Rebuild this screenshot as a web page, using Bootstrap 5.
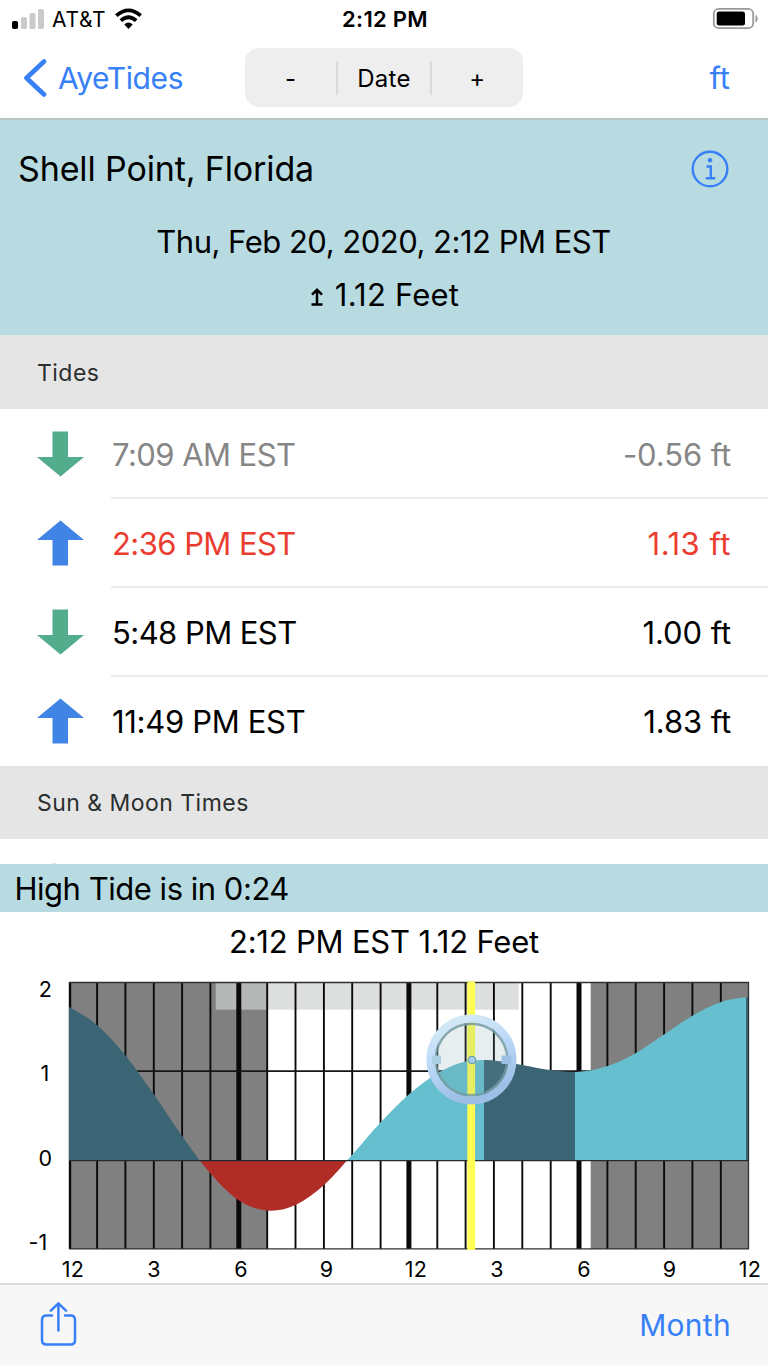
<!DOCTYPE html>
<html lang="en">
<head>
<meta charset="utf-8">
<meta name="viewport" content="width=device-width, initial-scale=1">
<title>AyeTides</title>
<link href="https://cdn.jsdelivr.net/npm/bootstrap@5.3.0/dist/css/bootstrap.min.css" rel="stylesheet">
<style>
body{font-family:Inter,sans-serif;color:#000;background:#fff;line-height:1.2;height:1365px;overflow:hidden}
svg{display:block;flex:none}
.status{height:38px;font-size:21px;padding:0 9px 0 12px}
.status>*{flex:1 1 0}
.carrier{letter-spacing:.7px;margin:2px 0 0 6px}
.clock{font-size:22px;letter-spacing:.3px;padding-right:1px}
.topnav{height:82px;border-bottom:2px solid #b9c4c6;padding:0 23px 1px}
.topnav>*{flex:1 1 0}
.accent{color:#3880f7;font-size:31px;text-decoration:none}
.back{font-size:30px;letter-spacing:-.42px}
.back span{margin-left:11px}
.unit{padding-right:15px}
.segment{flex:0 0 278px;height:59px;border-radius:14px;background:#eee;font-size:24px;letter-spacing:.3px}
.segment>button{border:0;background:none;padding:2px 0 0;height:34px;letter-spacing:inherit;line-height:32px;color:#000}
.segment>button+button{border-left:2px solid #dadada}
.aqua{background:#b7dbe0}
.place{height:215px;padding:30px 39px 0 18px}
.place-name{font-size:34px;height:38px;line-height:37px;letter-spacing:-.13px;margin:0;font-weight:400}
.moment{font-size:31px;letter-spacing:-.5px;line-height:38px;margin:35px -20px 0 0}
.level{font-size:31px;letter-spacing:.2px;line-height:38px;margin:15px -23px 0 0}
.level svg{margin:4px 12px 0 0}
.sect{height:74px;background:#e5e5e5;color:#2b2f2f;font-size:23px;letter-spacing:.47px;padding:3px 0 0 37px;margin:0;font-weight:400}
.sect.low{height:73px;padding-top:2px}
.tides{padding-top:1px}
.tide{height:89px;padding:0 0 1px 37px;font-size:31px}
.tide .entry{margin-left:27px;height:89px;border-bottom:2px solid #ececec;padding:3px 37px 0 1px;letter-spacing:-.56px}
.tide:last-child .entry{border-color:transparent;letter-spacing:-.32px}
.tide .entry .ht{letter-spacing:-.1px}
.tide .next .ht{letter-spacing:.5px}
.past{color:#868686}.next{color:#ea3d2f}
.peek{height:25px}
.countdown{height:48px;font-size:31px;letter-spacing:-.48px;padding:1px 0 0 14.5px}
.chart-title{font-size:31px;letter-spacing:-.2px;height:59px;margin-bottom:1px}
.axis{font-size:21.5px;letter-spacing:.3px}
.toolbar-b{height:82px;background:#f7f7f7;border-top:2px solid #dcdcdc;padding:0 37px 1px 39px}
.month{font-size:30px;letter-spacing:.3px}
</style>
</head>
<body class="d-flex flex-column">
<header>
  <div class="status d-flex align-items-center">
    <div class="d-flex align-items-center">
      <svg width="34" height="24" viewBox="0 0 34 24"><rect y="14" width="6" height="8" rx="1.8"/><g fill="#c9cacb"><rect x="9" y="10" width="6" height="12" rx="1.8"/><rect x="17.500" y="6" width="6" height="16" rx="1.8"/><rect x="26" y="2" width="6" height="20" rx="1.8"/></g></svg>
      <span class="carrier">AT&amp;T</span>
      <svg class="ms-2" width="30" height="24" viewBox="0 0 30 24"><g fill="none" stroke="#000" stroke-width="3.700"><path d="M2.300 8.700Q14.500-1.900 26.700 8.700"/><path d="M6.800 13.700Q14.500 6.800 22.200 13.700"/></g><path d="M10.300 17.400Q14.500 13.500 18.700 17.400L14.500 22Z"/></svg>
    </div>
    <div class="clock fw-semibold text-center">2:12 PM</div>
    <div class="d-flex justify-content-end">
      <svg width="48" height="24" viewBox="0 0 48 24"><rect x="2.800" y="1.800" width="39.400" height="19.400" rx="5" fill="none" stroke="#98999a" stroke-width="1.800"/><rect x="5.700" y="4.500" width="28.300" height="14" rx="2.500"/><path d="M45 8.500q2.600 3 0 6.400z" fill="#98999a" stroke="#98999a"/></svg>
    </div>
  </div>
  <nav class="topnav d-flex align-items-center">
    <a class="accent back d-flex align-items-center" href="#"><svg width="24" height="40" viewBox="0 0 24 40"><path d="M21 3.500 3.500 20 21 36.500" fill="none" stroke="currentColor" stroke-width="4.700" stroke-linecap="round" stroke-linejoin="round"/></svg><span>AyeTides</span></a>
    <div class="segment d-flex align-items-center"><button class="col">-</button><button class="col">Date</button><button class="col">+</button></div>
    <div class="text-end"><a class="accent unit" href="#">ft</a></div>
  </nav>
</header>
<section class="place aqua">
  <div class="d-flex justify-content-between align-items-center">
    <h1 class="place-name">Shell Point, Florida</h1>
    <svg width="38" height="38" viewBox="0 0 38 38" fill="none" stroke="#3880f7" stroke-width="2.400"><circle cx="19" cy="19" r="17.300"/><circle cx="19" cy="10.300" r="2.300" fill="#3880f7" stroke="none"/><path d="M15.500 16.500h4.300V28M14.800 28.200h9.500"/></svg>
  </div>
  <div class="moment text-center">Thu, Feb 20, 2020, 2:12 PM EST</div>
  <div class="level d-flex justify-content-center align-items-center"><svg width="12" height="18" viewBox="0 0 12 18" fill="none" stroke="#000" stroke-width="2.500"><path d="M6 1.500V16.500M.5 16.500h11M1 6.600 6 1.800l5 4.800"/></svg>1.12 Feet</div>
</section>
<h2 class="sect d-flex align-items-center">Tides</h2>
<div class="tides" id="tides"></div>
<h2 class="sect low d-flex align-items-center">Sun &amp; Moon Times</h2>
<div class="peek"><svg width="60" height="25"><path d="M52.500 24.500h4" stroke="#e9dcdc"/></svg></div>
<div class="countdown aqua d-flex align-items-center">High Tide is in 0:24</div>
<section>
  <div class="chart-title d-flex align-items-center justify-content-center">2:12 PM EST 1.12 Feet</div>
  <svg width="768" height="311" viewBox="0 972 768 311">
    <defs>
      <clipPath id="water"><path id="curve"/></clipPath>
      <linearGradient id="ring" x1="0" y1="0" x2=".35" y2="1"><stop offset="0" stop-color="#d9ecf3"/><stop offset=".45" stop-color="#c0dcfa"/><stop offset="1" stop-color="#9dbfe6"/></linearGradient>
    </defs>
    <rect x="69" y="982" width="198" height="267" fill="#808080"/>
    <rect x="590.700" y="982" width="158.300" height="267" fill="#808080"/>
    <rect x="215.700" y="982" width="303" height="27.700" fill="#ccd0ce" fill-opacity=".69"/>
    <g id="grid" stroke="#0a0a0a"></g>
    <path d="M69 1071.200H749" stroke="#161616" stroke-width="1.800"/>
    <g clip-path="url(#water)">
      <rect x="69" y="982" width="132" height="267" fill="#3b6574"/>
      <rect x="199" y="1160" width="149" height="89" fill="#b02c26"/>
      <rect x="346" y="982" width="138" height="178.500" fill="#66bfce"/>
      <rect x="484" y="982" width="91" height="178.500" fill="#3b6574"/>
      <rect x="575" y="982" width="171" height="178.500" fill="#66bfce"/>
      <rect x="746" y="982" width="3" height="178.500" fill="#3b6574"/>
    </g>
    <path d="M69 1160.700H749" stroke="#222b2d" stroke-width="1.300"/>
    <path d="M69 982.500H748.500V1248.900H69" fill="none" stroke="#2c3232" stroke-width="1.300"/>
    <rect x="467.300" y="981.500" width="7.800" height="268.500" fill="#ffff54"/>
    <g fill="none">
      <circle cx="471.500" cy="1059.500" r="37" fill="#78a0a5" fill-opacity=".18"/>
      <circle cx="471.500" cy="1059.500" r="36" stroke="#749ba3" stroke-width="3" stroke-opacity=".85"/>
      <circle cx="471.500" cy="1059.500" r="41" stroke="url(#ring)" stroke-width="8"/>
      <path d="M432 1055.500h9v8.500h-9z" fill="#abd0e4"/><path d="M501.500 1055.500h10v8.500h-10z" fill="#9cc0e3"/>
      <circle cx="472" cy="1060" r="3.700" fill="#a9cdea" stroke="#6da0b1" stroke-width="1.300"/>
    </g>
    <g class="axis" id="axis"></g>
  </svg>
</section>
<footer class="toolbar-b d-flex justify-content-between align-items-center">
  <svg width="38" height="46" viewBox="0 0 38 46" fill="none" stroke="#3880f7" stroke-width="2.500" stroke-linecap="round" stroke-linejoin="round"><path d="M13 13.500H7.500Q3 13.500 3 18v20q0 4.500 4.500 4.500h24q4.500 0 4.500-4.500V18q0-4.500-4.500-4.500H26M19.400 28.500V1.500M11.800 8.700l7.600-7.400 7.600 7.400"/></svg>
  <a class="accent month" href="#">Month</a>
</footer>
<script>
const tides = [
  {t:'7:09 AM EST', h:'-0.56 ft', up:false, cls:'past'},
  {t:'2:36 PM EST', h:'1.13 ft', up:true, cls:'next'},
  {t:'5:48 PM EST', h:'1.00 ft', up:false, cls:''},
  {t:'11:49 PM EST', h:'1.83 ft', up:true, cls:''}
];
document.getElementById('tides').innerHTML = tides.map(d => `
  <div class="tide d-flex align-items-center">
    <svg width="47" height="46" viewBox="0 0 47 46">${d.up
      ? '<path fill="#4084e6" d="M23.500 .5 47 20H31V45.500H15.500V20H0z"/>'
      : '<path fill="#53ac8b" d="M15.500 .5H31V26H47L23.500 45.500 0 26H15.500z"/>'}</svg>
    <div class="entry ${d.cls} flex-grow-1 d-flex justify-content-between align-items-center"><span>${d.t}</span><span class="ht">${d.h}</span></div>
  </div>`).join('');

// tide curve through sampled heights, joined with cubic Hermite segments
const p = [[69,1007],[97,1025],[125.5,1055.5],[153.7,1094.3],[182,1136],[210.5,1173.5],[239,1200.5],[271,1210.7],[296,1204.7],[324,1185],[352,1155],[380.5,1122.5],[409,1094.3],[437,1073.5],[460,1063],[484,1060],[522,1065],[550,1070],[579,1071.8],[607,1066.3],[636,1053],[664,1034.500],[692.5,1015.8],[721,1002],[749,997.3]];
const slope = i => {
  const a = p[Math.max(i - 1, 0)], b = p[i], c = p[Math.min(i + 1, p.length - 1)];
  if (a === b || b === c) return (c[1] - a[1]) / (c[0] - a[0]) * (b === c ? .3 : .85);
  const h = b[0] - a[0], k = c[0] - b[0];
  return ((b[1] - a[1]) / h * k + (c[1] - b[1]) / k * h) / (h + k);
};
let d = `M69 1160.5L${p[0]}`;
for (let i = 0; i < p.length - 1; i++) {
  const b = p[i], c = p[i+1], w = (c[0] - b[0]) / 3;
  d += `C${b[0] + w} ${b[1] + slope(i) * w} ${c[0] - w} ${c[1] - slope(i + 1) * w} ${c}`;
}
document.getElementById('curve').setAttribute('d', d + 'V1160.5Z');

// hour lines, heavier every six hours
let g = '';
for (let h = 0; h < 24; h++) {
  const x = h ? 68.7 + 28.35 * h : 70;
  g += `<path d="M${x.toFixed(1)} 982V1249" stroke-width="${h === 0 ? 2.4 : h % 6 ? 1.9 : 5}"/>`;
}
document.getElementById('grid').innerHTML = g;

const labels = [['2',45.5,996.5],['1',45,1080.5],['0',45.5,1165.5],['-1',38,1249.5],
  ['12',73,1277],['3',154,1277],['6',241,1277],['9',326.5,1277],['12',416,1277],['3',497,1277],['6',584,1277],['9',669.5,1277],['12',750,1277]];
document.getElementById('axis').innerHTML = labels.map(([s,x,y]) => `<text x="${x}" y="${y}" text-anchor="middle">${s}</text>`).join('');
</script>
<script src="https://cdn.jsdelivr.net/npm/bootstrap@5.3.0/dist/js/bootstrap.bundle.min.js"></script>
</body>
</html>
